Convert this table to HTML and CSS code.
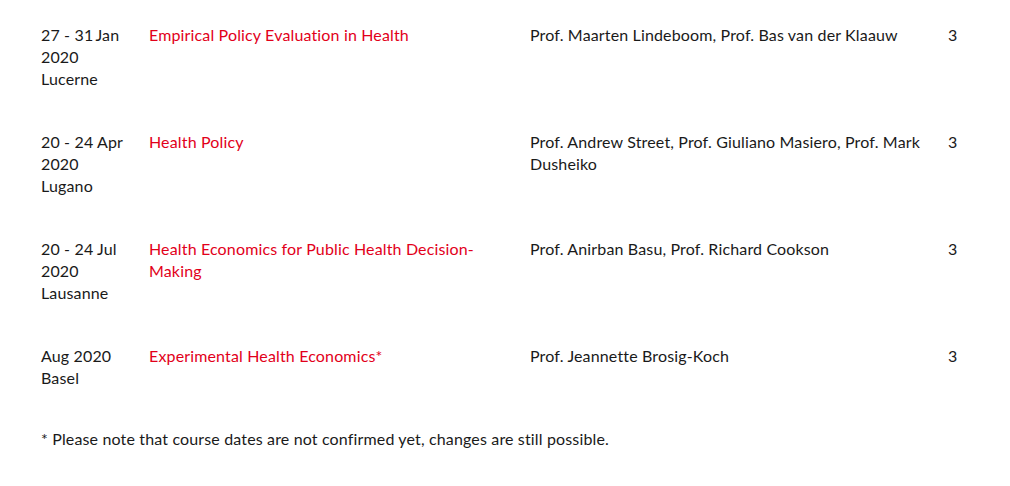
FILE: index.html
```html
<!DOCTYPE html>
<html>
<head>
<meta charset="utf-8">
<link rel="stylesheet" href="styles.css">
</head>
<body>
<div class="page">
  <table class="courses">
    <tr>
      <td class="c-date">27 - 31&#8201;Jan 2020<br>Lucerne</td>
      <td class="c-title"><a href="#">Empirical Policy Evaluation in Health</a></td>
      <td class="c-prof">Prof. Maarten Lindeboom, Prof. Bas van der Klaauw</td>
      <td class="c-ects">3</td>
    </tr>
    <tr>
      <td class="c-date">20 - 24 Apr 2020<br>Lugano</td>
      <td class="c-title"><a href="#">Health Policy</a></td>
      <td class="c-prof">Prof. Andrew Street, Prof. Giuliano Masiero, Prof. Mark Dusheiko</td>
      <td class="c-ects">3</td>
    </tr>
    <tr>
      <td class="c-date">20 - 24 Jul 2020<br>Lausanne</td>
      <td class="c-title"><a href="#">Health Economics for Public Health Decision-Making</a></td>
      <td class="c-prof">Prof. Anirban Basu, Prof. Richard Cookson</td>
      <td class="c-ects">3</td>
    </tr>
    <tr>
      <td class="c-date">Aug 2020<br>Basel</td>
      <td class="c-title"><a href="#">Experimental Health Economics*</a></td>
      <td class="c-prof">Prof. Jeannette Brosig-Koch</td>
      <td class="c-ects">3</td>
    </tr>
  </table>
  <p class="note">* Please note that course dates are not confirmed yet, changes are still possible.</p>
</div>
</body>
</html>
```

FILE: styles.css
```css
html, body {
  margin: 0;
  padding: 0;
  background: #ffffff;
}
body {
  font-family: Lato, "Liberation Sans", sans-serif;
  font-size: 16px;
  letter-spacing: 0.15px;
  line-height: 22px;
  color: #1a1a1a;
}
.page {
  padding: 6px 0 0 41px;
}
.courses {
  border-collapse: collapse;
  table-layout: fixed;
  width: 930px;
}
.courses td {
  vertical-align: top;
  padding: 18px 0 23px 0;
}
.c-date { width: 108px; padding-right: 10px; }
.c-title { width: 381px; }
.c-prof { width: 418px; }
.c-ects { width: 23px; }
.c-title a {
  color: #e2001a;
  text-decoration: none;
  display: block;
  padding-right: 50px;
}
.c-prof { padding-right: 0; }
.note {
  margin: 16px 0 0 0;
}
```
